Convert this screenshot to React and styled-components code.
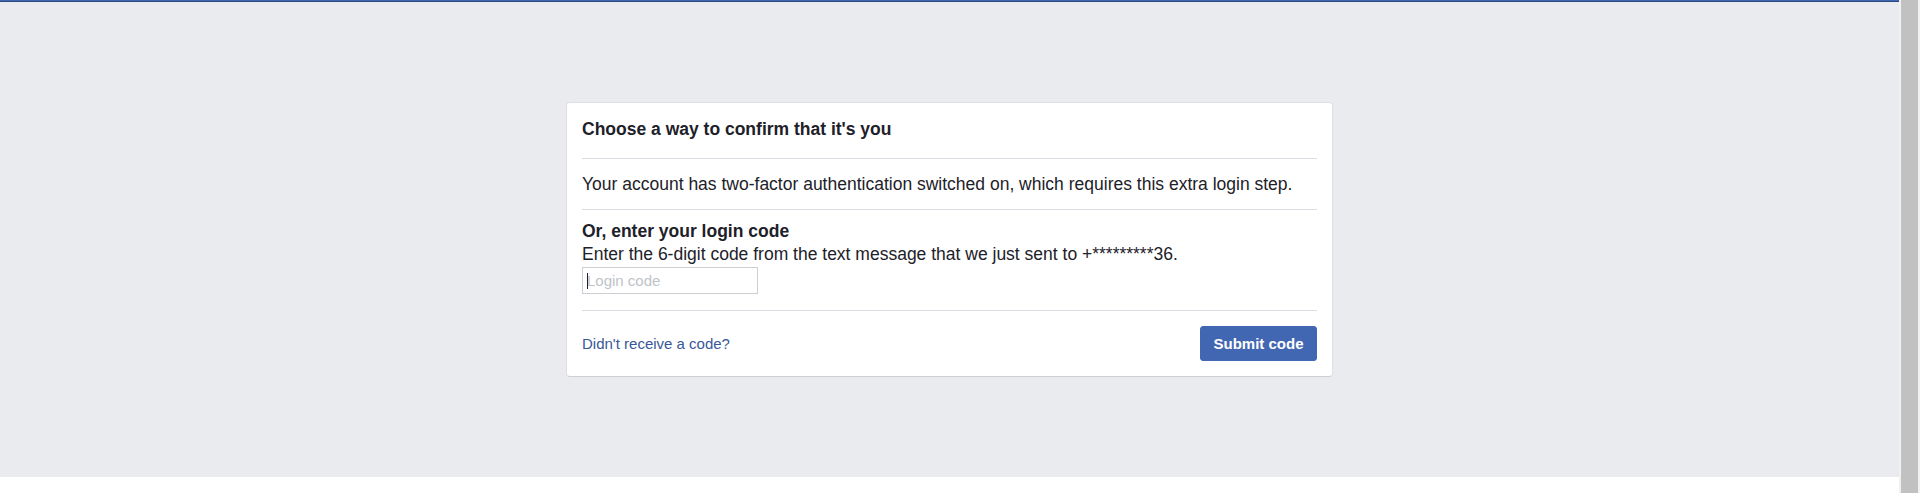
import styled, { createGlobalStyle } from "styled-components";

const GlobalStyle = createGlobalStyle`
   html, body {
      margin: 0;
      padding: 0;
      background: #ffffff;
      font-family: "Liberation Sans", Arial, Helvetica, sans-serif;
      color: #1d2129;
   }
`

const Viewport = styled.div`
   display: flex;
   height: 493px;
   overflow: hidden;
`
const Page = styled.div`
   flex: 1;
   display: flex;
   flex-direction: column;
`
const TopBar = styled.div`
   height: 1px;
   background: #4267b2;
   border-bottom: 1px solid #29487d;
`
const Stage = styled.main`
   height: 475px;
   box-sizing: border-box;
   padding-top: 100px;
   background: #e9ebee;
   display: flex;
   justify-content: center;
   align-items: flex-start;
`
const Card = styled.section`
   width: 767px;
   box-sizing: border-box;
   background: #ffffff;
   border: 1px solid #dddfe2;
   border-bottom-color: #ccd0d5;
   border-radius: 4px;
`
const Section = styled.div`
   margin: 0 15px;
   padding: ${(p) => p.$pad};
   border-bottom: ${(p) => (p.$last ? "none" : "1px solid #dadde1")};
   display: ${(p) => (p.$row ? "flex" : "block")};
   align-items: center;
   justify-content: space-between;
`
const Title = styled.h2`
   margin: 0;
   font-size: 17.5px;
   line-height: 22px;
   font-weight: bold;
`
const Text = styled.p`
   margin: 0;
   font-size: 17.5px;
   line-height: ${(p) => p.$lh || "22px"};
   font-weight: ${(p) => (p.$bold ? "bold" : "normal")};
`
const InputWrap = styled.div`
   position: relative;
   width: 176px;
   margin-top: 1px;
   /* the blinking text caret, drawn so the photo always shows it */
   &::after {
      content: "";
      position: absolute;
      left: 5px;
      top: 6px;
      width: 1px;
      height: 16px;
      background: #1d2129;
   }
`
const CodeInput = styled.input`
   display: block;
   width: 176px;
   height: 27px;
   box-sizing: border-box;
   padding: 0 4px;
   border: 1px solid #ccd0d5;
   border-radius: 0;
   font-family: inherit;
   font-size: 15px;
   color: #1d2129;
   outline: none;
   &::placeholder {
      color: #bec3c9;
   }
`
const HelpLink = styled.a`
   font-size: 15px;
   color: #385898;
   text-decoration: none;
   cursor: pointer;
`
const SubmitButton = styled.button`
   width: 117px;
   height: 35px;
   border: 1px solid #4267b2;
   border-radius: 3px;
   background: #4267b2;
   color: #ffffff;
   font-family: inherit;
   font-size: 15px;
   font-weight: bold;
   cursor: pointer;
`
const Scrollbar = styled.div`
   width: 21px;
   box-sizing: border-box;
   padding: 0 2px;
   background: #f1f1f1;
   display: flex;
`
const Thumb = styled.div`
   flex: 1;
   background: #c1c1c1;
`

export default function App() {
   return (
      <>
         <GlobalStyle />
         <Viewport>
            <Page>
               <TopBar />
               <Stage>
                  <Card>
                     <Section $pad="15px 0 18px">
                        <Title>Choose a way to confirm that it's you</Title>
                     </Section>
                     <Section $pad="14px 0">
                        <Text>Your account has two-factor authentication switched on, which requires this extra login step.</Text>
                     </Section>
                     <Section $pad="10px 0 16px">
                        <Text $bold $lh="23px">Or, enter your login code</Text>
                        <Text $lh="23px">Enter the 6-digit code from the text message that we just sent to +*********36.</Text>
                        <InputWrap>
                           <CodeInput type="text" placeholder="Login code" />
                        </InputWrap>
                     </Section>
                     <Section $pad="15px 0" $row $last>
                        <HelpLink>Didn't receive a code?</HelpLink>
                        <SubmitButton>Submit code</SubmitButton>
                     </Section>
                  </Card>
               </Stage>
            </Page>
            <Scrollbar><Thumb /></Scrollbar>
         </Viewport>
      </>
   );
}
